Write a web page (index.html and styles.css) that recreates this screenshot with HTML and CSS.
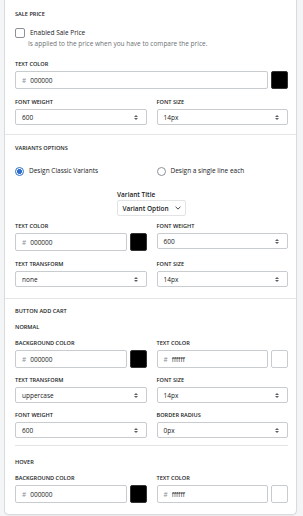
FILE: index.html
```html
<!DOCTYPE html>
<html lang="en">
<head>
    <meta charset="UTF-8">
    <meta name="viewport" content="width=device-width, initial-scale=1.0">
    <title>Product Settings</title>
    <link rel="stylesheet" href="styles.css">
</head>
<body>
    <div class="settings-card">
        <div class="section section-sale">
            <div class="section-title">Sale Price</div>
            <label class="check-row">
                <span class="checkbox"></span>
                <span>Enabled Sale Price</span>
            </label>
            <div class="help-text">Is applied to the price when you have to compare the price.</div>

            <div class="field first-field">
                <div class="field-label">Text Color</div>
                <div class="color-row">
                    <div class="text-input"><span class="hash">#</span>000000</div>
                    <div class="swatch swatch-black"></div>
                </div>
            </div>

            <div class="two-col field">
                <div>
                    <div class="field-label">Font Weight</div>
                    <div class="select-box">600<span class="arrows"></span></div>
                </div>
                <div>
                    <div class="field-label">Font Size</div>
                    <div class="select-box">14px<span class="arrows"></span></div>
                </div>
            </div>
        </div>

        <div class="section section-variants">
            <div class="section-title">Variants Options</div>
            <div class="two-col radio-row">
                <label class="radio-option">
                    <span class="radio checked"></span>
                    <span>Design Classic Variants</span>
                </label>
                <label class="radio-option">
                    <span class="radio"></span>
                    <span>Design a single line each</span>
                </label>
            </div>

            <div class="variant-preview">
                <div class="variant-title">Variant Title</div>
                <div class="variant-button">Variant Option
                    <svg class="chevron" width="6" height="4" viewBox="0 0 6 4"><path d="M0.6 0.8 L3 3.1 L5.4 0.8" fill="none" stroke="#333" stroke-width="0.9"/></svg>
                </div>
            </div>

            <div class="two-col variant-fields">
                <div>
                    <div class="field-label">Text Color</div>
                    <div class="color-row">
                        <div class="text-input"><span class="hash">#</span>000000</div>
                        <div class="swatch swatch-black"></div>
                    </div>
                </div>
                <div>
                    <div class="field-label">Font Weight</div>
                    <div class="select-box">600<span class="arrows"></span></div>
                </div>
            </div>

            <div class="two-col field">
                <div>
                    <div class="field-label">Text Transform</div>
                    <div class="select-box">none<span class="arrows"></span></div>
                </div>
                <div>
                    <div class="field-label">Font Size</div>
                    <div class="select-box">14px<span class="arrows"></span></div>
                </div>
            </div>
        </div>

        <div class="section section-cart">
            <div class="section-title">Button Add Cart</div>
            <div class="sub-title">Normal</div>

            <div class="two-col sub-fields">
                <div>
                    <div class="field-label">Background Color</div>
                    <div class="color-row">
                        <div class="text-input"><span class="hash">#</span>000000</div>
                        <div class="swatch swatch-black"></div>
                    </div>
                </div>
                <div>
                    <div class="field-label">Text Color</div>
                    <div class="color-row">
                        <div class="text-input"><span class="hash">#</span>ffffff</div>
                        <div class="swatch swatch-white"></div>
                    </div>
                </div>
            </div>

            <div class="two-col field tight">
                <div>
                    <div class="field-label">Text Transform</div>
                    <div class="select-box">uppercase<span class="arrows"></span></div>
                </div>
                <div>
                    <div class="field-label">Font Size</div>
                    <div class="select-box">14px<span class="arrows"></span></div>
                </div>
            </div>

            <div class="two-col field tight">
                <div>
                    <div class="field-label">Font Weight</div>
                    <div class="select-box">600<span class="arrows"></span></div>
                </div>
                <div>
                    <div class="field-label">Border Radius</div>
                    <div class="select-box">0px<span class="arrows"></span></div>
                </div>
            </div>

            <div class="divider"></div>

            <div class="sub-title hover-title">Hover</div>

            <div class="two-col sub-fields">
                <div>
                    <div class="field-label">Background Color</div>
                    <div class="color-row">
                        <div class="text-input"><span class="hash">#</span>000000</div>
                        <div class="swatch swatch-black"></div>
                    </div>
                </div>
                <div>
                    <div class="field-label">Text Color</div>
                    <div class="color-row">
                        <div class="text-input"><span class="hash">#</span>ffffff</div>
                        <div class="swatch swatch-white"></div>
                    </div>
                </div>
            </div>
        </div>
    </div>
</body>
</html>
```
FILE: styles.css
```css
body {
    margin: 0;
    background: #f4f5f6;
    font-family: "Open Sans", Arial, sans-serif;
    font-size: 6.5px;
    color: #202223;
}
.settings-card {
    margin: 0 6px 4px 4px;
    background: #fff;
    border: 1px solid #d9dbdd;
    border-top: none;
    border-radius: 0 0 5px 5px;
    box-shadow: 0 1px 1px rgba(0, 0, 0, 0.05);
}
.section {
    padding: 0 8px 0 10px;
    border-bottom: 1px solid #e4e5e7;
}
.section:last-child {
    border-bottom: none;
}
.section-sale {
    padding-top: 9px;
    padding-bottom: 9px;
}
.section-variants {
    padding-top: 8px;
    padding-bottom: 11px;
}
.section-cart {
    padding-top: 7px;
    padding-bottom: 11px;
}
.section-title,
.sub-title,
.field-label {
    font-size: 5.6px;
    font-weight: 600;
    text-transform: uppercase;
    line-height: 10px;
}
.field-label {
    margin-bottom: 2px;
}
.sub-title {
    margin-top: 6px;
}
.hover-title {
    margin-top: 11px;
}
.check-row {
    display: flex;
    align-items: center;
    gap: 5px;
    margin-top: 9px;
    line-height: 10px;
}
.checkbox {
    width: 8px;
    height: 8px;
    border: 1px solid #8c9196;
    border-radius: 2px;
}
.help-text {
    margin-top: 1px;
    padding-left: 13px;
    line-height: 10px;
    color: #6d7175;
}
.field {
    margin-top: 8px;
}
.first-field {
    margin-top: 10px;
}
.field.tight {
    margin-top: 7px;
}
.two-col {
    display: grid;
    grid-template-columns: 1fr 1fr;
    column-gap: 10px;
}
.color-row {
    display: flex;
    gap: 3px;
}
.text-input,
.select-box {
    position: relative;
    box-sizing: border-box;
    display: flex;
    align-items: center;
    border: 1px solid #c9cccf;
    border-radius: 2px;
    background: #fff;
    padding-left: 6px;
}
.text-input {
    flex: 1;
    height: 18px;
}
.hash {
    color: #8c9196;
    margin-right: 4px;
}
.select-box {
    height: 16px;
}
.arrows {
    position: absolute;
    right: 8px;
    top: 5px;
    width: 4px;
    height: 5px;
}
.arrows::before,
.arrows::after {
    content: "";
    position: absolute;
    left: 0;
    border-left: 2px solid transparent;
    border-right: 2px solid transparent;
}
.arrows::before {
    top: 0;
    border-bottom: 2px solid #5c5f62;
}
.arrows::after {
    bottom: 0;
    border-top: 2px solid #5c5f62;
}
.swatch {
    box-sizing: border-box;
    width: 17px;
    height: 18px;
    border-radius: 2px;
}
.swatch-black {
    background: #000;
    border: 1px solid #333;
}
.swatch-white {
    background: #fff;
    border: 1px solid #c9cccf;
}
.radio-row {
    margin-top: 13px;
    line-height: 10px;
}
.radio-option {
    display: flex;
    align-items: center;
    gap: 5px;
}
.radio {
    box-sizing: border-box;
    width: 9px;
    height: 9px;
    border: 1px solid #8c9196;
    border-radius: 50%;
}
.radio.checked {
    border-color: #2c6ecb;
    background: radial-gradient(circle, #2c6ecb 0 2.2px, #fff 2.6px);
}
.variant-preview {
    width: 69px;
    margin: 14px auto 0;
}
.variant-title {
    font-weight: 600;
    line-height: 10px;
}
.variant-button {
    box-sizing: border-box;
    height: 16px;
    display: flex;
    align-items: center;
    justify-content: center;
    gap: 6px;
    border: 1px solid #e1e3e5;
    border-radius: 2px;
    font-weight: 600;
}
.variant-fields {
    margin-top: 5px;
}
.sub-fields {
    margin-top: 6px;
}
.divider {
    margin-top: 7px;
    height: 1px;
    background: #e1e3e5;
}
```
